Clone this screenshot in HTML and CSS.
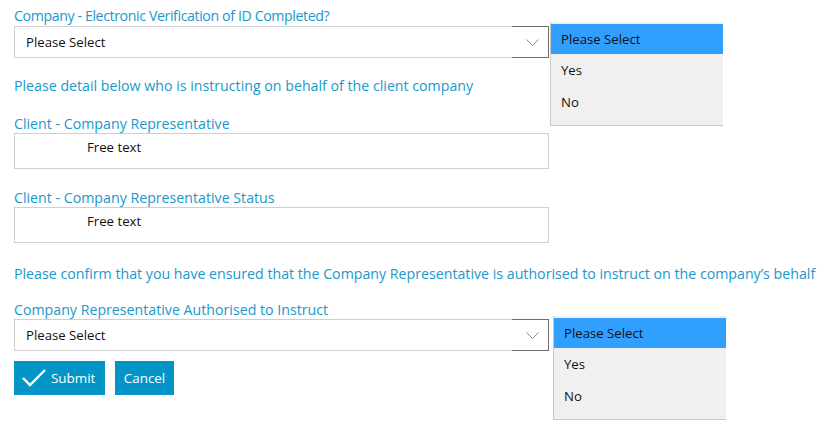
FILE: index.html
```html
<!DOCTYPE html>
<html>
<head>
<meta charset="utf-8">
<link rel="stylesheet" href="styles.css">
</head>
<body>
<div class="page">
  <form class="form">
    <div class="field">
      <label class="label label-tight">Company - Electronic Verification of ID Completed?</label>
      <div class="select select-focus">
        <span class="select-value">Please Select</span>
        <svg class="chev" width="13" height="8" viewBox="0 0 13 8"><path d="M0.5 0.5 L6.5 6.5 L12.5 0.5" fill="none" stroke="#8a8a8a" stroke-width="1"/></svg>
      </div>
    </div>
    <p class="note note-first">Please detail below who is instructing on behalf of the client company</p>
    <div class="field field-rep">
      <label class="label label-box">Client - Company Representative</label>
      <div class="textbox"><span class="free">Free text</span></div>
    </div>
    <div class="field field-status">
      <label class="label label-box">Client - Company Representative Status</label>
      <div class="textbox"><span class="free">Free text</span></div>
    </div>
    <p class="note note-wide">Please confirm that you have ensured that the Company Representative is authorised to instruct on the company’s behalf</p>
    <div class="field field-auth">
      <label class="label label-box">Company Representative Authorised to Instruct</label>
      <div class="select select-focus">
        <span class="select-value">Please Select</span>
        <svg class="chev" width="13" height="8" viewBox="0 0 13 8"><path d="M0.5 0.5 L6.5 6.5 L12.5 0.5" fill="none" stroke="#8a8a8a" stroke-width="1"/></svg>
      </div>
    </div>
    <div class="actions">
      <button type="button" class="btn btn-submit">
        <svg class="tick" width="24" height="18" viewBox="0 0 24 18"><path d="M1 9 L8 16 L23 1" fill="none" stroke="#fff" stroke-width="2.4"/></svg>
        <span>Submit</span>
      </button>
      <button type="button" class="btn btn-cancel">Cancel</button>
    </div>
  </form>

  <ul class="popup popup-one">
    <li class="opt opt-active">Please Select</li>
    <li class="opt">Yes</li>
    <li class="opt">No</li>
  </ul>
  <ul class="popup popup-two">
    <li class="opt opt-active">Please Select</li>
    <li class="opt">Yes</li>
    <li class="opt">No</li>
  </ul>
</div>
</body>
</html>
```
FILE: styles.css
```css
* { box-sizing: border-box; }
html, body { margin: 0; padding: 0; background: #fff; }
body {
  font-family: "Open Sans", "Noto Sans", "Liberation Sans", sans-serif;
  color: #1a98cc;
}
.page {
  position: relative;
  width: 825px;
  height: 430px;
  overflow: hidden;
}
.form {
  padding: 6px 0 0 14px;
  display: flex;
  flex-direction: column;
  width: 549px;
}
.label {
  display: block;
  font-size: 14.2px;
  line-height: 19px;
  height: 20px;
  color: #1a98cc;
  white-space: nowrap;
}
.label-tight { letter-spacing: -0.4px; }
.label-box { height: 19px; }
.select {
  height: 32px;
  border: 1px solid #cfcfcf;
  display: flex;
  align-items: center;
  justify-content: space-between;
  padding: 0 9px 0 11px;
  background: #fff;
  position: relative;
}
.select-focus::after {
  content: "";
  position: absolute;
  top: -1px;
  right: -1px;
  bottom: -1px;
  width: 36px;
  border: 1px solid #6e6e6e;
  border-left: none;
}
.select-value {
  font-size: 13.2px;
  color: #111;
  margin-top: -1px;
}
.chev { display: block; margin-top: 1px; }
.note {
  margin: 0;
  font-size: 14.2px;
  line-height: 19px;
  white-space: nowrap;
}
.note-first { margin-top: 18px; }
.field-rep { margin-top: 19px; }
.field-status { margin-top: 19px; }
.note-wide { margin-top: 21px; }
.field-auth { margin-top: 17px; }
.textbox {
  height: 36px;
  border: 1px solid #cfcfcf;
  padding: 1px 0 0 72px;
}
.free {
  font-size: 13.2px;
  color: #111;
}
.actions {
  display: flex;
  gap: 10px;
  margin-top: 10px;
}
.btn {
  height: 34px;
  border: none;
  background: #0395c8;
  color: #fff;
  font-family: inherit;
  font-size: 13.4px;
  display: flex;
  align-items: center;
  padding: 0 9px;
  cursor: pointer;
}
.btn-submit { width: 91px; gap: 5px; padding-left: 8px; }
.btn-cancel { width: 59px; justify-content: center; }
.tick { display: block; }
.popup {
  position: absolute;
  margin: 0;
  padding: 2px 0 0 0;
  list-style: none;
  background: #f0f0f0;
  border-left: 1px solid #c8c8c8;
  border-bottom: 1px solid #c8c8c8;
  width: 173px;
  height: 104px;
}
.popup-one { left: 550px; top: 22px; }
.popup-two { left: 553px; top: 316px; }
.opt {
  height: 32px;
  line-height: 32px;
  padding-left: 10px;
  font-size: 13.2px;
  color: #111;
}
.opt-active { background: #319ffe; height: 30px; line-height: 30px; }
```
